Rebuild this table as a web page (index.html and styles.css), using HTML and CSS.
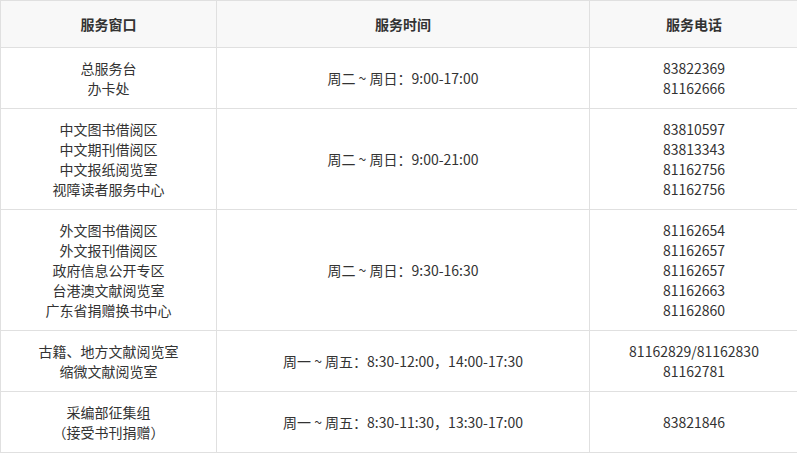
FILE: index.html
```html
<!DOCTYPE html>
<html lang="zh-CN">
<head>
<meta charset="utf-8">
<link rel="stylesheet" href="styles.css">
</head>
<body>
<table class="svc">
  <colgroup>
    <col class="c1">
    <col class="c2">
    <col class="c3">
  </colgroup>
  <thead>
    <tr><th>服务窗口</th><th>服务时间</th><th>服务电话</th></tr>
  </thead>
  <tbody>
    <tr>
      <td>总服务台<br>办卡处</td>
      <td>周二 ~ 周日：9:00-17:00</td>
      <td>83822369<br>81162666</td>
    </tr>
    <tr>
      <td>中文图书借阅区<br>中文期刊借阅区<br>中文报纸阅览室<br>视障读者服务中心</td>
      <td>周二 ~ 周日：9:00-21:00</td>
      <td>83810597<br>83813343<br>81162756<br>81162756</td>
    </tr>
    <tr>
      <td>外文图书借阅区<br>外文报刊借阅区<br>政府信息公开专区<br>台港澳文献阅览室<br>广东省捐赠换书中心</td>
      <td>周二 ~ 周日：9:30-16:30</td>
      <td>81162654<br>81162657<br>81162657<br>81162663<br>81162860</td>
    </tr>
    <tr>
      <td>古籍、地方文献阅览室<br>缩微文献阅览室</td>
      <td>周一 ~ 周五：8:30-12:00，14:00-17:30</td>
      <td>81162829/81162830<br>81162781</td>
    </tr>
    <tr>
      <td>采编部征集组<br>（接受书刊捐赠）</td>
      <td>周一 ~ 周五：8:30-11:30，13:30-17:00</td>
      <td>83821846</td>
    </tr>
  </tbody>
</table>
</body>
</html>
```
FILE: styles.css
```css
html, body {
  margin: 0;
  padding: 0;
  background: #fff;
  overflow: hidden;
}
.svc {
  border-collapse: collapse;
  table-layout: fixed;
  width: 798px;
  font-family: "Noto Sans CJK SC", "Microsoft YaHei", sans-serif;
  font-size: 14px;
  line-height: 20px;
  color: #333;
}
.c1 { width: 216px; }
.c2 { width: 373px; }
.c3 { width: 209px; }
.svc th, .svc td {
  border: 1px solid #e0e0e0;
  text-align: center;
  vertical-align: middle;
  padding: 10px 8px;
}
.svc th {
  background: #f8f8f8;
  font-weight: bold;
  padding: 13px 8px;
}
```
